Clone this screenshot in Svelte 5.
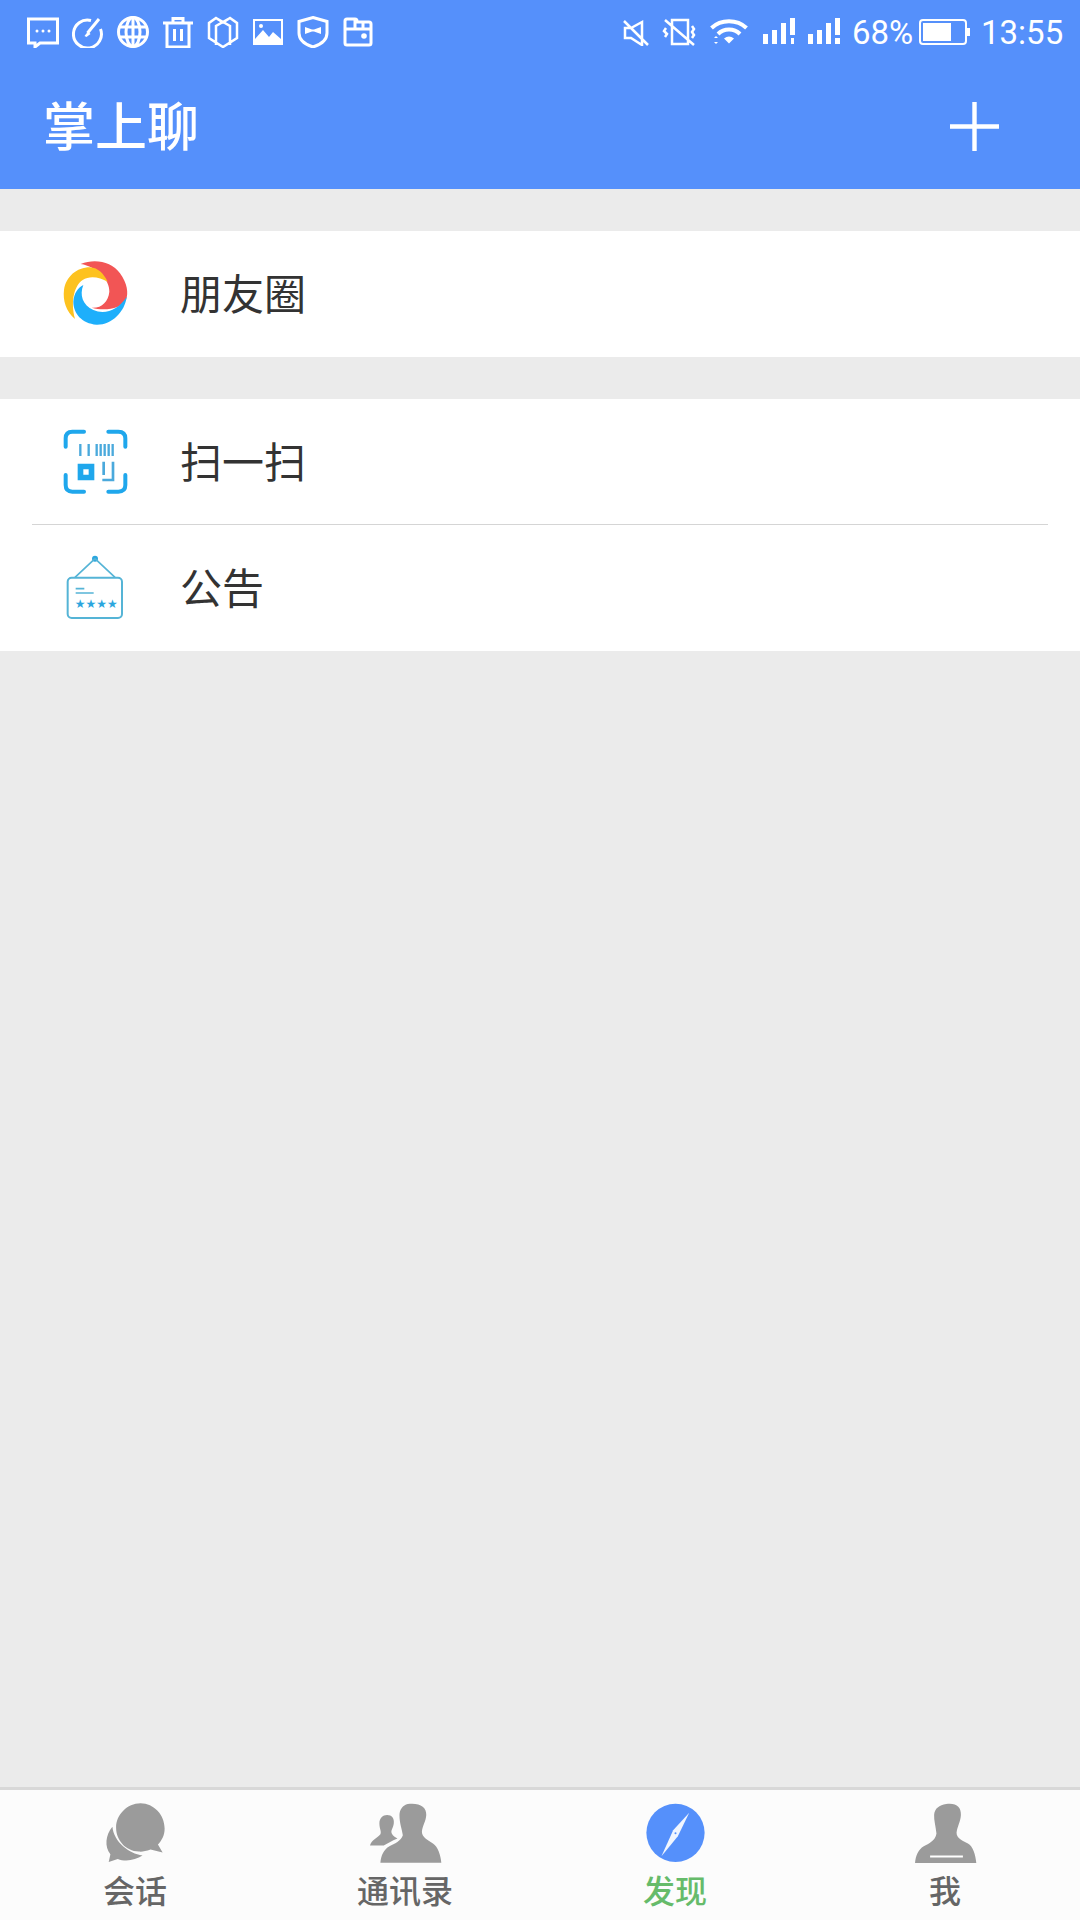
<script>
  const menuGroups = [
    [{ id: 'moments', label: '朋友圈', vb: '0 12 300 300' }],
    [
      { id: 'scan', label: '扫一扫', vb: '0 6 300 300' },
      { id: 'notice', label: '公告', vb: '0 -6 300 300' }
    ]
  ];
</script>

<div class="page">
  <header class="top">
    <div class="status">
      <div class="notif">
        <svg viewBox="0 0 32 32"><path d="M1.500 3h29v24H13l-5 4v-4H1.500z" class="s"/><circle cx="10" cy="15" r="1.500" class="f"/><circle cx="16" cy="15" r="1.500" class="f"/><circle cx="22" cy="15" r="1.500" class="f"/></svg>
        <svg viewBox="0 0 32 32"><path d="M19 4.500A14 14 0 1 0 28.500 13" class="s"/><path d="M27 3 15.500 17" class="s"/><path d="M16 15.500l2.500 2.500-4 3-2 -1z" class="f"/></svg>
        <svg viewBox="0 0 32 32"><circle cx="16" cy="16" r="14.500" class="s"/><ellipse cx="16" cy="16" rx="7" ry="14.500" class="s"/><path d="M3 11h26M3 21h26M16 2v28" class="s"/></svg>
        <svg viewBox="0 0 32 32"><path d="M1 7h30M11 7V2.500h10V7M5 7v24h22V7M12.500 13v12M19.500 13v12" class="s"/></svg>
        <svg viewBox="0 0 32 32"><path d="M16 6.500 23 2l7 5v15l-14 9-14-9V7l7-5zM9 2l14 8v19M23 2 9 10v19" class="t"/></svg>
        <svg viewBox="0 0 32 32"><path d="M1 3h30v26H1zM3 5v18l8-9 6 7 4-5 8 7V5z" class="f" fill-rule="evenodd"/><circle cx="9" cy="10" r="2" class="f"/></svg>
        <svg viewBox="0 0 32 32"><path d="M16 1.500 30 5.500V17c0 7-6 11.500-14 14C8 28.500 2 24 2 17V5.500z" class="s"/><path d="M8 11l7 2.500h2l7-2.500v7l-7-2.500h-2L8 18z" class="f"/></svg>
        <svg viewBox="0 0 32 32"><path d="M3 13V5q0-2 2-2h8q2 0 2 2v1h12q2 0 2 2v19q0 2-2 2H5q-2 0-2-2zM3 13h26M13 3v10M21 6v7" class="s"/><circle cx="22" cy="20" r="2.800" class="f"/></svg>
      </div>
      <div class="sys">
        <svg class="mute" viewBox="0 0 28 28"><path d="M2 3l24 24M3 10v10h6l11 7V4L9 10z" class="t"/></svg>
        <svg class="vib" viewBox="0 0 34 28"><path d="M10 2h16v24H10zM3 2l29 25M4 10l-2 3 3 3-2 3M30 8l2 3-2 3 2 3-2 3" class="t"/></svg>
        <svg class="wifi" viewBox="0 0 38 28"><path d="M1.500 10C11 1 27 1 36.500 10M8 16c6-6 16-6 22 0" class="s3"/><path d="M14 20.500q5-4 10 0l-5 5z" class="f"/><path d="M4 20l2-2 2 2zM4 24l2 2 2-2z" class="f"/></svg>
        <svg class="sig first" viewBox="0 0 34 28"><path d="M1 16h5v10H1zM10 12h5v14h-5zM19 5h5v21h-5zM28 0h5v17h-5z" class="f"/><path d="M29 20h3v6h-3z" class="f"/></svg>
        <svg class="sig" viewBox="0 0 34 28"><path d="M1 16h5v10H1zM10 12h5v14h-5zM19 5h5v21h-5zM28 0h5v17h-5z" class="f"/><path d="M28 20h5v6h-5z" class="f"/></svg>
        <span class="pct">68%</span>
        <svg class="bat" viewBox="0 0 51 26"><rect x="1" y="1" width="46" height="24" rx="3" class="s2"/><rect x="4" y="4" width="28" height="18" class="f"/><rect x="48" y="9" width="3" height="8" class="f"/></svg>
        <span class="time">13:55</span>
      </div>
    </div>
    <div class="title-row">
      <h1>掌上聊</h1>
      <svg class="plus" viewBox="0 0 50 50"><path d="M0 25h50M25 0v50" fill="none" stroke="#fff" stroke-width="4.500"/></svg>
    </div>
  </header>

  <main>
    {#each menuGroups as group}
      <section class="group">
        {#each group as item, i}
          {#if i > 0}<div class="divider"></div>{/if}
          <div class="row">
            <svg class="ic" viewBox={item.vb}>
              {#if item.id === 'moments'}
                <path fill="#f25555" d="M122 72C165 55 215 65 240 100C262 130 266 160 258 180C245 205 195 215 155 203C185 205 205 185 208 155C210 120 170 80 122 72Z"/>
                <path fill="#fdc21f" d="M105 237C78 215 68 180 72 150C78 110 110 82 150 82C175 84 190 100 203 125C180 112 150 105 128 120C105 135 90 180 105 237Z"/>
                <path fill="#1eaffb" d="M130 135C118 165 128 195 160 210C195 225 235 210 260 170C255 215 215 255 170 254C125 250 100 220 100 185C102 160 112 145 130 135Z"/>
              {:else if item.id === 'scan'}
                <g fill="none" stroke="#1fa7ec" stroke-width="12" stroke-linecap="round">
                  <path d="M77 110V85Q77 65 97 65H132M205 65H235Q256 65 256 85V110M77 195V225Q77 245 97 245H132M256 195V225Q256 245 235 245H205"/>
                </g>
                <path d="M121 102v36M146 102v36M170 102v36M182 102v36M194 102v36M206 102v36M218 102v36" fill="none" stroke="#4aa9dc" stroke-width="7"/>
                <path d="M113 161h50v50h-50zM130 178v16h16v-16z" fill="#1fa7ec" fill-rule="evenodd"/>
                <path d="M191 155v40M219 155v55h-32" fill="none" stroke="#4aa9dc" stroke-width="8"/>
              {:else}
                <circle cx="165" cy="56" r="9" fill="#2ba6de"/>
                <path d="M165 56 105 112M165 56 225 112" fill="none" stroke="#55b4d6" stroke-width="5"/>
                <rect x="83" y="113" width="163" height="121" rx="12" fill="none" stroke="#55b4d6" stroke-width="6"/>
                <path d="M107 146h26M107 159h54" fill="none" stroke="#55b4d6" stroke-width="5"/>
                <text x="104" y="203" class="stars">★★★★</text>
              {/if}
            </svg>
            <span>{item.label}</span>
          </div>
        {/each}
      </section>
    {/each}
  </main>

  <nav>
    <div class="tab">
      <svg viewBox="110 45 230 230">
        <path fill="#9b9b9b" d="M156 140C135 165 132 200 150 222L145 245L172 236C195 245 225 240 246 226C205 220 160 185 156 140Z"/>
        <path fill="#9b9b9b" d="M240 70C280 70 312 105 312 145C312 165 304 180 292 193L306 217L270 208C255 213 245 215 235 214C195 212 167 180 167 142C167 105 200 70 240 70Z"/>
      </svg>
      <span>会话</span>
    </div>
    <div class="tab">
      <svg viewBox="918 45 230 230">
        <path fill="#9b9b9b" d="M1040 72C1075 68 1096 80 1095 105C1094 125 1084 135 1082 155C1082 172 1100 180 1115 190C1130 200 1138 225 1140 247H958C960 225 968 208 985 198C1000 190 1020 182 1025 165C1022 145 1015 130 1015 105C1015 90 1025 75 1040 72Z"/>
        <path fill="#9b9b9b" d="M978 105C992 105 1000 115 998 130C996 145 988 150 992 160C996 168 1002 170 1009 175C992 182 978 190 968 196H927C930 180 950 172 958 162C962 155 955 145 955 130C955 115 965 105 978 105Z"/>
      </svg>
      <span>通讯录</span>
    </div>
    <div class="tab active">
      <svg viewBox="110 45 230 230">
        <circle cx="225" cy="158" r="87" fill="#5590fb"/>
        <path fill="#fff" d="M266 98 232 168 183 228 218 150Z" opacity=".92"/>
        <circle cx="225" cy="159" r="3" fill="#5590fb"/>
      </svg>
      <span>发现</span>
    </div>
    <div class="tab">
      <svg viewBox="918 45 230 230">
        <path fill="#9b9b9b" d="M1035 72C1065 68 1080 80 1079 105C1078 125 1068 140 1066 158C1066 175 1085 182 1100 190C1115 198 1123 225 1125 248H942C944 225 952 208 968 198C983 190 1003 182 1006 160C1004 140 998 120 999 105C1000 85 1015 75 1035 72Z"/>
        <path d="M987 229h98" stroke="#fff" stroke-width="6" fill="none"/>
      </svg>
      <span>我</span>
    </div>
  </nav>
</div>

<style>
  :global(body) {
    margin: 0;
    font-family: "Noto Sans CJK SC", "Noto Sans", sans-serif;
  }
  .page {
    width: 1080px;
    height: 1920px;
    display: flex;
    flex-direction: column;
    background: #ebebeb;
    overflow: hidden;
  }
  .top {
    height: 189px;
    background: #5590fb;
    color: #fff;
    flex: none;
  }
  .status {
    height: 64px;
    display: flex;
    justify-content: space-between;
    align-items: center;
    padding: 0 17px 0 27px;
  }
  .notif {
    display: flex;
    gap: 13px;
  }
  .notif svg {
    width: 32px;
    height: 32px;
  }
  .sys {
    display: flex;
    align-items: center;
    gap: 11px;
    font-family: Roboto, sans-serif;
    font-size: 33px;
  }
  .sys svg { height: 28px; }
  .mute { width: 28px; }
  .vib { width: 34px; margin-left: 1px; }
  .wifi { width: 38px; margin-left: 3px; }
  .sig { width: 34px; }
  .sig.first { margin-left: 3px; }
  .sys svg.bat { width: 51px; height: 26px; margin-left: -5px; }
  .pct { width: 61px; }
  .time { width: 82px; white-space: nowrap; }
  .s, .s2, .s3, .t { fill: none; stroke: #fff; }
  .s { stroke-width: 3; }
  .s2 { stroke-width: 2; }
  .s3 { stroke-width: 4; }
  .t { stroke-width: 2.500; }
  .f { fill: #fff; }
  .title-row {
    height: 125px;
    display: flex;
    align-items: center;
    justify-content: space-between;
    padding: 0 81px 0 43px;
  }
  h1 {
    margin: 0 0 5px;
    font-size: 52px;
    font-weight: 500;
    line-height: 1;
  }
  .plus {
    width: 49px;
    height: 49px;
  }
  main {
    flex: 1;
    padding-top: 42px;
    display: flex;
    flex-direction: column;
    gap: 42px;
  }
  .group {
    background: #fff;
  }
  .divider {
    height: 1px;
    margin: -1px 32px 0;
    background: #d5d5d5;
  }
  .row {
    height: 126px;
    display: flex;
    align-items: center;
    padding-left: 40px;
    font-size: 42px;
    color: #333;
  }
  .row span {
    margin-bottom: 5px;
  }
  .ic {
    width: 100px;
    height: 100px;
    margin-right: 40px;
  }
  .stars {
    font-family: "DejaVu Sans", sans-serif;
    font-size: 36px;
    fill: #2ba6de;
  }
  nav {
    flex: none;
    height: 130px;
    border-top: 3px solid #d8d8d8;
    background: #fcfcfc;
    display: grid;
    grid-template-columns: repeat(4, 1fr);
  }
  .tab {
    display: flex;
    flex-direction: column;
    align-items: center;
    padding-top: 5px;
    color: #666;
    font-size: 32px;
    font-weight: 500;
    line-height: 40px;
  }
  .tab svg {
    width: 77px;
    height: 77px;
    margin-bottom: -3px;
  }
  .tab.active { color: #66bb6a; }
</style>
